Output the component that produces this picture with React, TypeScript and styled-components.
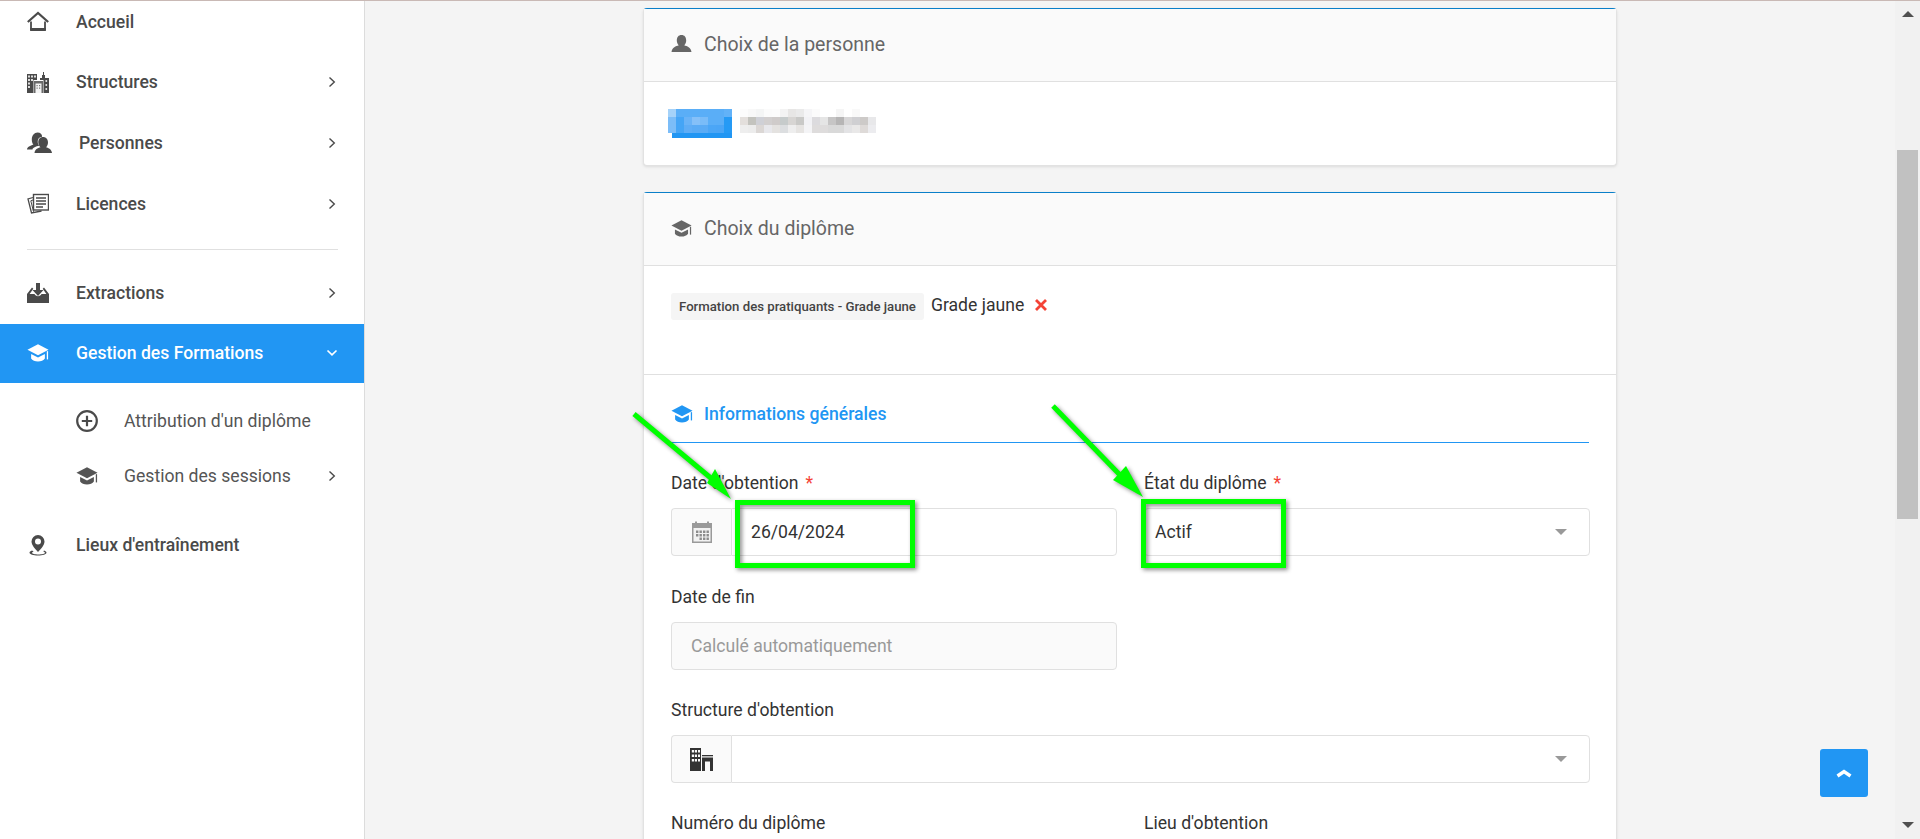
import React from "react";
import styled, { createGlobalStyle } from "styled-components";

const Global = createGlobalStyle`
  html, body { margin: 0; padding: 0; height: 100%; overflow: hidden; background: #f4f4f4; }
  #root { height: 100%; }
  * { box-sizing: border-box; }
`;

const Page = styled.div`
  position: relative;
  width: 1920px;
  height: 839px;
  overflow: hidden;
  display: flex;
  flex-direction: column;
  font-family: Roboto, "Liberation Sans", sans-serif;
  color: #333;
`;
const TopLine = styled.div`
  height: 1px;
  flex: none;
  background: #c9b9b5;
`;
const Shell = styled.div`
  flex: 1;
  min-height: 0;
  display: flex;
`;
const Sidebar = styled.nav`
  width: 365px;
  flex: none;
  background: #fff;
  border-right: 1px solid #dcdcdc;
`;
const NavGroup = styled.div`
  display: flex;
  flex-direction: column;
  gap: 18.4px;
`;
const NavItem = styled.div<{ $top?: number; $iconW?: number }>`
  height: 42px;
  margin-top: ${(p) => p.$top ?? 0}px;
  padding: 0 28px 0 27px;
  display: flex;
  align-items: center;
  color: #4a4a4a;
  font-size: 17.6px;
  font-weight: 500;
  & > svg:first-child { flex: none; margin-right: ${(p) => p.$iconW ?? 27}px; }
`;
const ActiveItem = styled(NavItem)`
  height: 59px;
  background: #2196f3;
  color: #fff;
  padding-right: 26px;
`;
const SubGroup = styled.div`
  margin-top: 17px;
  display: flex;
  flex-direction: column;
  gap: 13px;
`;
const SubItem = styled.div`
  height: 42px;
  padding: 0 28px 0 76px;
  display: flex;
  align-items: center;
  color: #555;
  font-size: 17.6px;
  font-weight: 400;
  & > svg:first-child { flex: none; margin-right: 26px; }
`;
const NavDivider = styled.div`
  width: 311px;
  height: 1px;
  margin: 24.3px 0 0 27px;
  background: #e0e0e0;
`;
const Chev = styled.svg`
  margin-left: auto;
  flex: none;
`;
const Main = styled.main`
  flex: 1;
  min-width: 0;
  padding-top: 7px;
  display: flex;
  flex-direction: column;
  align-items: center;
  gap: 26px;
`;
const Card = styled.section`
  width: 974px;
  flex: none;
  background: #fff;
  border-radius: 4px;
  border: 1px solid #e2e2e2;
  border-top: 1px solid #0a7fc9;
  box-shadow: 0 1px 3px rgba(0, 0, 0, 0.1);
`;
const CardHeader = styled.header`
  height: 73px;
  padding: 0 27px 2px;
  display: flex;
  align-items: center;
  gap: 12px;
  background: #fafafa;
  border-bottom: 1px solid #e0e0e0;
  color: #666;
  font-size: 19.5px;
  font-weight: 400;
`;
const PersonBody = styled.div`
  height: 83px;
  padding: 27px 24px 0;
  display: flex;
  align-items: flex-start;
  gap: 8px;
`;
const DiplomaBody = styled.div`
  height: 109px;
  padding: 27px 27px 0;
  display: flex;
  align-items: flex-start;
  border-bottom: 1px solid #e0e0e0;
`;
const Chip = styled.span`
  height: 27px;
  padding: 0 8px;
  display: inline-flex;
  align-items: center;
  background: #f5f5f5;
  border-radius: 3px;
  font-size: 13.2px;
  font-weight: 500;
  color: #444;
`;
const ChipValue = styled.span`
  margin-left: 7px;
  height: 23px;
  display: inline-flex;
  align-items: center;
  font-size: 17.6px;
  color: #333;
`;
const RemoveIcon = styled.svg`
  margin: 6px 0 0 11px;
`;
const Form = styled.div`
  padding: 0 27px;
`;
const SectionTitle = styled.h3`
  margin: 0 0 28px;
  height: 68px;
  display: flex;
  align-items: center;
  gap: 11px;
  padding-top: 10px;
  border-bottom: 1px solid #2196f3;
  color: #2196f3;
  font-size: 17.6px;
  font-weight: 500;
`;
const Grid = styled.div`
  display: grid;
  grid-template-columns: 446px 446px;
  column-gap: 27px;
`;
const Field = styled.div<{ $wide?: boolean; $gap?: number }>`
  grid-column: ${(p) => (p.$wide ? "1 / -1" : "auto")};
  margin-bottom: ${(p) => p.$gap ?? 28}px;
`;
const Label = styled.label`
  display: block;
  height: 24px;
  line-height: 24px;
  margin-bottom: 13px;
  font-size: 17.6px;
  color: #333;
`;
const Star = styled.span`
  margin-left: 7px;
  color: #f44336;
`;
const InputGroup = styled.div`
  height: 48px;
  display: flex;
`;
const Addon = styled.div`
  width: 60px;
  flex: none;
  display: flex;
  align-items: center;
  justify-content: center;
  background: #fafafa;
  border: 1px solid #e0e0e0;
  border-right: none;
  border-radius: 4px 0 0 4px;
`;
const Input = styled.div<{ $attached?: boolean; $disabled?: boolean; $indent?: number }>`
  flex: 1;
  height: 48px;
  padding: 0 22px 0 ${(p) => p.$indent ?? 19}px;
  display: flex;
  align-items: center;
  justify-content: space-between;
  border: 1px solid #e0e0e0;
  border-radius: ${(p) => (p.$attached ? "0 4px 4px 0" : "4px")};
  background: ${(p) => (p.$disabled ? "#fafafa" : "#fff")};
  color: ${(p) => (p.$disabled ? "#999" : "#333")};
  font-size: 17.6px;
`;
const Caret = styled.span`
  width: 0;
  height: 0;
  border-left: 6px solid transparent;
  border-right: 6px solid transparent;
  border-top: 6px solid #999;
`;
const SelectSpacer = styled.span``;
const Scrollbar = styled.div`
  width: 25px;
  flex: none;
  background: #f1f1f1;
  display: flex;
  flex-direction: column;
  align-items: center;
  padding-top: 10px;
`;
const ArrowUp = styled.span`
  width: 0;
  height: 0;
  border-left: 6px solid transparent;
  border-right: 6px solid transparent;
  border-bottom: 6px solid #505050;
`;
const Thumb = styled.div`
  width: 21px;
  height: 369px;
  margin-top: 133px;
  background: #c1c1c1;
`;
const ArrowDown = styled.span`
  width: 0;
  height: 0;
  margin-top: 303px;
  border-left: 6px solid transparent;
  border-right: 6px solid transparent;
  border-top: 6px solid #505050;
`;
const TopButton = styled.button`
  position: absolute;
  left: 1820px;
  top: 749px;
  width: 48px;
  height: 48px;
  padding: 0;
  border: none;
  border-radius: 3px;
  background: #2196f3;
  display: flex;
  align-items: center;
  justify-content: center;
`;
const Annotations = styled.svg`
  position: absolute;
  left: 0;
  top: 0;
  pointer-events: none;
  filter: drop-shadow(2px 2px 2px rgba(0, 0, 0, 0.45));
`;

const ChevronRight = () => (
  <Chev width="8" height="12" viewBox="0 0 8 12" fill="none" stroke="#4a4a4a" strokeWidth="1.4">
    <polyline points="1.5,1.5 6.3,6 1.5,10.5" />
  </Chev>
);
const ChevronDown = () => (
  <Chev width="12" height="8" viewBox="0 0 12 8" fill="none" stroke="#fff" strokeWidth="1.700">
    <polyline points="1.500,1.500 6,5.800 10.500,1.500" />
  </Chev>
);
const Cap = ({ size = 22, color = "#555" }: { size?: number; color?: string }) => (
  <svg width={size} height={size} viewBox="0 0 24 24" fill={color}>
    <path d="M12 2.500 23.500 8.500 12 14.500.5 8.500z" />
    <path d="M4.500 13l7.500 3.800 7.500-3.800v5C17 22.300 7 22.300 4.500 18z" />
    <rect x="21.600" y="10" width="1.400" height="9" />
  </svg>
);
const HomeIcon = () => (
  <svg width="22" height="22" viewBox="0 0 22 22" fill="none" stroke="#4a4a4a">
    <polyline points="0.8,11 11,2 21.2,11" strokeWidth="2.2" />
    <path d="M4 10.5v8.2h14v-8.2" strokeWidth="1.8" />
    <rect x="3.2" y="17" width="15.6" height="3" fill="#4a4a4a" stroke="none" />
  </svg>
);
const BuildingsIcon = () => (
  <svg width="22" height="22" viewBox="0 0 22 22" fill="#4a4a4a">
    <path d="M0 3h10v19H0z" />
    <path d="M13 7h2V4h1V1h1v3h1v3h4v15H13z" />
    <path d="M6.500 9h10v13h-10z" fill="#fff" />
    <path d="M7 10h9v12H7z" fill="#6a6a6a" />
    <path d="M8.500 12.500h6v9.500h-6z" fill="#f4f4f4" />
    <path d="M9.500 14h1.200v1.200H9.500zM12 14h1.200v1.200H12zM9.500 16.500h1.200v1.200H9.500zM12 16.500h1.200v1.200H12z" fill="#777" />
    <path d="M1 4.500h2v2H1zM4 4.500h2v2H4zM7 4.500h2v2H7zM1 8h2v2H1zM4 8h2v2H4zM1 11.500h2v2H1zM1 15h2v2H1zM18.500 9h1.600v2h-1.600zM18.500 13h1.600v2h-1.600zM18.500 17h1.600v2h-1.600z" fill="#ddd" />
  </svg>
);
const PersonsIcon = () => (
  <svg width="25" height="22" viewBox="0 0 25 22" fill="#4a4a4a">
    <path d="M10.5 0.5c3 0 4.7 2 4.6 4.2-2.8.2-4.6 2.4-4.4 5.2.1 1.7.9 3 1.6 3.9-3.4.6-6.8 2-6.8 3.6H0c.2-2.4 3.2-3.6 6.4-4.8-1-1.2-1.6-2.8-1.6-5.2 0-4 2.5-6.9 5.7-6.9z" />
    <path d="M16 5c2.9 0 5 2.1 5 5.4 0 2-.9 3.8-2 4.9 2.8.9 5.6 2 6 5.7H7.5c.3-3.6 3.2-4.8 6-5.700-1.100-1.100-2.200-2.900-2.200-4.900C11.300 7.100 13.100 5 16 5z" />
  </svg>
);
const LicencesIcon = () => (
  <svg width="22" height="22" viewBox="0 0 22 22" fill="none" stroke="#4a4a4a">
    <rect x="6.5" y="1.5" width="15" height="15.5" fill="#fff" strokeWidth="1.4" />
    <path d="M9 5h10M9 8h10M9 11h10M9 14h7" strokeWidth="1.3" />
    <path d="M6 4.5 1 6l3.5 14 10-2" strokeWidth="1.3" />
    <path d="M6 7 3.8 7.8l2.8 11" strokeWidth="1" />
  </svg>
);
const ExtractIcon = () => (
  <svg width="22" height="22" viewBox="0 0 22 22" fill="#4a4a4a">
    <path d="M9 1h4v7h3.5L11 14 5.500 8H9z" />
    <path d="M5 5.500 0 12v9h22v-9l-5-6.500-1.300 1.300 3.700 5.200H14.500c-.7 1.400-2 2.200-3.500 2.200s-2.800-.8-3.500-2.200H2.600l3.700-5.200z" />
  </svg>
);
const PlusCircleIcon = () => (
  <svg width="22" height="22" viewBox="0 0 22 22" fill="none" stroke="#4a4a4a">
    <circle cx="11" cy="11" r="9.8" strokeWidth="2.200" />
    <path d="M11 5.800v10.400M5.800 11h10.400" strokeWidth="2.200" />
  </svg>
);
const PinIcon = () => (
  <svg width="22" height="22" viewBox="0 0 22 22" fill="#4a4a4a">
    <path fillRule="evenodd" d="M11 1a6.500 6.500 0 0 1 6.500 6.500c0 3.600-3.500 7.400-6.500 10.500-3-3.100-6.500-6.900-6.500-10.500A6.500 6.500 0 0 1 11 1zm0 3.500a3 3 0 1 0 0 6 3 3 0 0 0 0-6z" />
    <path d="M5 16.500c-1.500.6-2.500 1.300-2.500 2.300 0 1.600 3.800 2.700 8.500 2.700s8.500-1.100 8.500-2.700c0-1-1-1.700-2.500-2.300l-.7.900c1 .4 1.700.9 1.700 1.400 0 .9-3 1.700-6.500 1.700s-6.500-.8-6.500-1.700c0-.5.700-1 1.700-1.400z" />
  </svg>
);
const PersonIcon = () => (
  <svg width="21" height="18" viewBox="0 0 20 18" fill="#666">
    <path d="M10 0c3 0 4.700 2.200 4.700 5.400 0 2-.9 3.800-2 4.900 3 1 6.500 2 7.300 6.700H0c.8-4.700 4.300-5.700 7.300-6.700-1.100-1.100-2-2.900-2-4.900C5.300 2.200 7 0 10 0z" />
  </svg>
);
const CalendarIcon = () => (
  <svg width="22" height="22" viewBox="0 0 22 22" fill="#9a9a9a">
    <path d="M1 2h3V0.500h2V2h10V0.500h2V2h3v20H1z" />
    <rect x="2.500" y="7" width="17" height="13.500" fill="#f2f2f2" />
    <path d="M5 9.500h2.400v2.400H5zM8.500 9.500h2.400v2.400H8.500zM12 9.500h2.400v2.400H12zM15.500 9.500h2.400v2.400h-2.400zM5 13h2.400v2.400H5zM8.500 13h2.400v2.400H8.500zM12 13h2.400v2.400H12zM15.500 13h2.400v2.400h-2.400zM8.500 16.500h2.400v2.400H8.500zM12 16.500h2.400v2.400H12zM15.500 16.500h2.400v2.400h-2.400z" fill="#8c8c8c" />
  </svg>
);
const SmallBuildingIcon = () => (
  <svg width="23" height="23" viewBox="0 0 23 23" fill="#333">
    <path fillRule="evenodd" d="M0 0h11v23H0zM1.800 2v2.500h2.400V2zM5 2v2.500h2V2zM8 2v2.500h2V2zM1.800 6.500V9h2.400V6.500zM5 6.500V9h2V6.500zM8 6.500V9h2V6.500zM1.800 11v2.500h2.400V11zM5 11v2.500h2V11zM8 11v2.500h2V11z" />
    <rect x="12" y="7" width="11" height="1.300" />
    <path d="M12 9.500h11V23h-3v-9.500h-5V23h-3z" />
  </svg>
);

const blues = [
  ["#a5d2f9", "#5aaef7", "#5aaef7", "#5aaef7", "#5aaef7", "#5aaef7", "#5aaef7", "#62b2f8"],
  ["#7cbdf8", "#45a5f6", "#6ab3f7", "#85c0f8", "#7abcf8", "#5aaef7", "#5aaef7", "#259af5"],
  ["#7cbdf8", "#45a5f6", "#5fadf6", "#5aabf5", "#5aabf5", "#4ba6f6", "#4aa5f6", "#259af5"],
];
const greys = [
  ["#fcfcfc", "#f8f8f8", "#f4f5f5", "#fbfbfb", "#fcfcfc", "#f3f3f3", "#e7e6e5", "#eaeaea", "#f5f5f7", "#fbfbfb", "#fff", "#fff", "#f5f5f5", "#fff", "#f9f9f9", "#fff", "#fff"],
  ["#e3dfdc", "#c3c3be", "#cfd0d6", "#d2cfcf", "#cfcbca", "#c6cbcb", "#d7d5d3", "#c9c9c7", "#f2f2f5", "#dcdbde", "#e5e5e5", "#c6c5c5", "#b6b5b5", "#d7d6d7", "#cfcfd2", "#cdcac8", "#e8e8ea"],
  ["#eeeeee", "#ececec", "#dbd7d5", "#e8e8ec", "#e4e2e0", "#dcdee0", "#eeeeee", "#e6e4e2", "#f4f4f6", "#dedcdc", "#dedcdc", "#d9d9d9", "#d9d9d9", "#e3e3e5", "#e9e8e8", "#dedad8", "#ececef"],
];
const Mosaic = ({ cells, extra }: { cells: string[][]; extra?: boolean }) => (
  <svg width={cells[0].length * 8} height={29} viewBox={`0 0 ${cells[0].length * 8} 29`} shapeRendering="crispEdges">
    {cells.map((row, y) => row.map((c, x) => <rect key={`${x}-${y}`} x={x * 8} y={y * 8} width="8" height="8" fill={c} />))}
    {extra && <rect x="4" y="24" width="60" height="5" fill="#2196f3" />}
  </svg>
);

export default function App() {
  return (
    <Page>
      <Global />
      <TopLine />
      <Shell>
        <Sidebar>
          <NavGroup>
            <NavItem><HomeIcon />Accueil</NavItem>
            <NavItem><BuildingsIcon />Structures<ChevronRight /></NavItem>
            <NavItem $iconW={27}><PersonsIcon />Personnes<ChevronRight /></NavItem>
            <NavItem $top={0.5}><LicencesIcon />Licences<ChevronRight /></NavItem>
          </NavGroup>
          <NavDivider />
          <NavItem $top={22}><ExtractIcon />Extractions<ChevronRight /></NavItem>
          <ActiveItem $top={10}><Cap color="#fff" />Gestion des Formations<ChevronDown /></ActiveItem>
          <SubGroup>
            <SubItem><PlusCircleIcon />Attribution d'un diplôme</SubItem>
            <SubItem><Cap />Gestion des sessions<ChevronRight /></SubItem>
          </SubGroup>
          <NavItem $top={27}><PinIcon />Lieux d'entraînement</NavItem>
        </Sidebar>
        <Main>
          <Card>
            <CardHeader><PersonIcon />Choix de la personne</CardHeader>
            <PersonBody>
              <Mosaic cells={blues} extra />
              <Mosaic cells={greys} />
            </PersonBody>
          </Card>
          <Card>
            <CardHeader><Cap size={21} color="#666" />Choix du diplôme</CardHeader>
            <DiplomaBody>
              <Chip>Formation des pratiquants - Grade jaune</Chip>
              <ChipValue>Grade jaune</ChipValue>
              <RemoveIcon width="12" height="12" viewBox="0 0 12 12" stroke="#f44336" strokeWidth="2.800">
                <path d="M1 1l10 10M11 1 1 11" />
              </RemoveIcon>
            </DiplomaBody>
            <Form>
              <SectionTitle><Cap size={22} color="#2196f3" />Informations générales</SectionTitle>
              <Grid>
                <Field $gap={29}>
                  <Label>Date d'obtention<Star>*</Star></Label>
                  <InputGroup>
                    <Addon><CalendarIcon /></Addon>
                    <Input $attached>26/04/2024</Input>
                  </InputGroup>
                </Field>
                <Field $gap={29}>
                  <Label>État du diplôme<Star>*</Star></Label>
                  <Input $indent={10}>Actif<Caret /></Input>
                </Field>
                <Field>
                  <Label>Date de fin</Label>
                  <Input $disabled>Calculé automatiquement</Input>
                </Field>
                <Field />
                <Field $wide>
                  <Label>Structure d'obtention</Label>
                  <InputGroup>
                    <Addon><SmallBuildingIcon /></Addon>
                    <Input $attached><SelectSpacer /><Caret /></Input>
                  </InputGroup>
                </Field>
                <Field>
                  <Label>Numéro du diplôme</Label>
                  <Input />
                </Field>
                <Field>
                  <Label>Lieu d'obtention</Label>
                  <Input />
                </Field>
              </Grid>
            </Form>
          </Card>
        </Main>
        <Scrollbar>
          <ArrowUp />
          <Thumb />
          <ArrowDown />
        </Scrollbar>
      </Shell>
      <TopButton aria-label="Haut de page">
        <svg width="16" height="10" viewBox="0 0 16 10" fill="none" stroke="#fff" strokeWidth="3.400">
          <polyline points="1.500,8 8,3.500 14.500,8" />
        </svg>
      </TopButton>
      <Annotations width="1920" height="839" viewBox="0 0 1920 839">
        <g fill="none" stroke="#00ff00" strokeWidth="5">
          <rect x="737.500" y="502.500" width="175" height="63" />
          <rect x="1143.500" y="501.500" width="140" height="64" />
          <line x1="634" y1="414" x2="712" y2="479" />
          <line x1="1053" y1="406" x2="1120" y2="475" />
        </g>
        <g fill="#00ff00">
          <polygon points="731,499 707,483 715,469" />
          <polygon points="1143,497 1113,480 1126,466" />
        </g>
      </Annotations>
    </Page>
  );
}
